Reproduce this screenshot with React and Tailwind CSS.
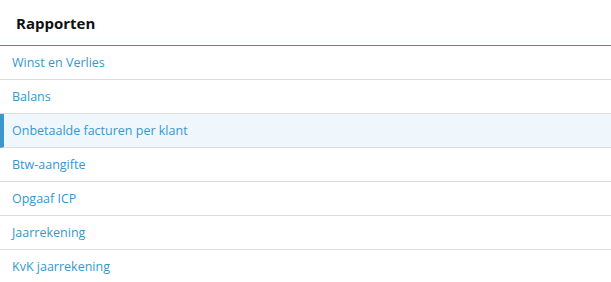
import React from "react";

const reports = [
  "Winst en Verlies",
  "Balans",
  "Onbetaalde facturen per klant",
  "Btw-aangifte",
  "Opgaaf ICP",
  "Jaarrekening",
  "KvK jaarrekening",
];

export default function App() {
  const active = 2;

  return (
    <div className="w-[611px] h-[282px] overflow-hidden bg-white font-['Open_Sans',sans-serif]">
      <div className="h-[46px] flex items-center pl-4 pt-px border-b border-[#3c8fc4]">
        <h1 className="text-[15px] font-bold text-[#111] leading-none">Rapporten</h1>
      </div>
      <ul>
        {reports.map((r, i) => (
          <li
            key={r}
            className={
              i === active
                ? "h-[34px] flex items-center pt-px border-b border-[#dcdcdc] bg-[#eff7fd] border-l-4 border-l-[#3a96cc] pl-2"
                : "h-[34px] flex items-center pt-px border-b border-[#dcdcdc] pl-3"
            }
          >
            <a href="#" className="text-[12.5px] text-[#3597cf] leading-none">
              {r}
            </a>
          </li>
        ))}
      </ul>
    </div>
  );
}
